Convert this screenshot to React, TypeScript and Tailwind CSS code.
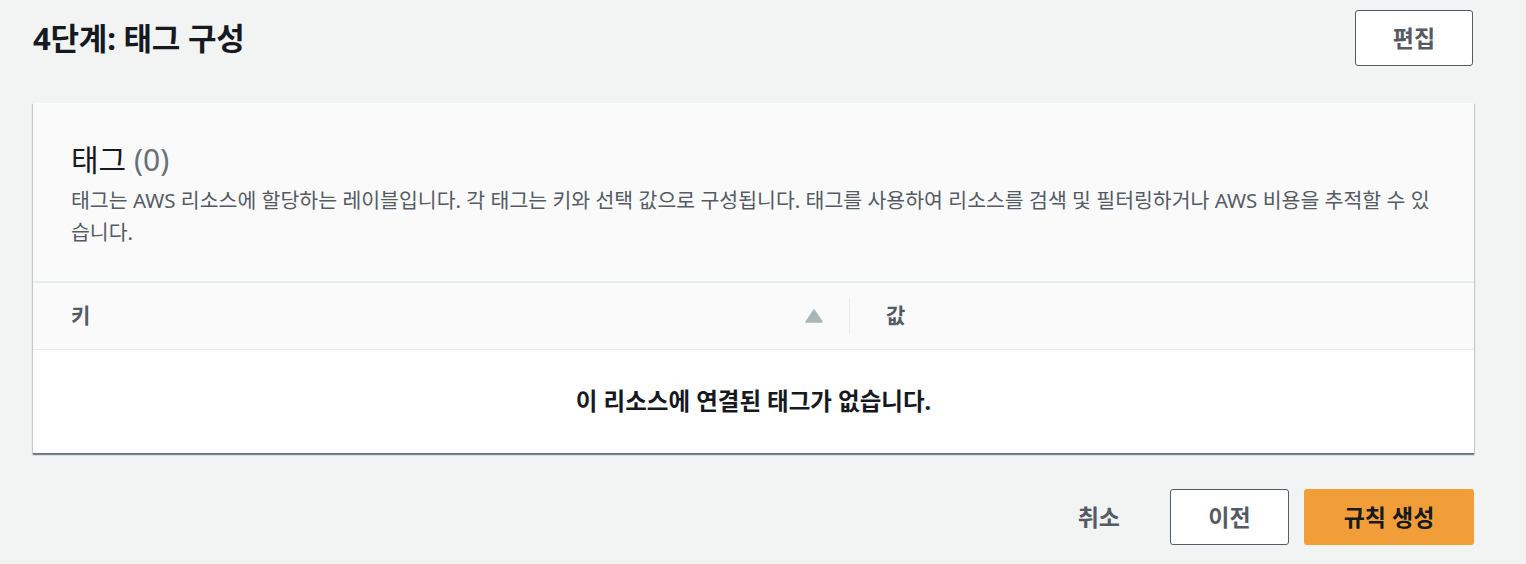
const font = { fontFamily: '"Noto Sans", "Noto Sans CJK KR", sans-serif' };

function SortUp() {
  return (
    <svg width="18" height="14" viewBox="0 0 18 14" className="block">
      <path d="M9 1 L17 13 L1 13 Z" fill="#aab7b8" stroke="#aab7b8" strokeLinejoin="round" strokeWidth="1.5" />
    </svg>
  );
}

export default function App() {
  return (
    <div className="w-[1526px] h-[564px] bg-[#f2f3f3] text-[#16191f] overflow-hidden" style={font}>
      {/* Header */}
      <div className="flex items-start justify-between pl-[33px] pr-[53px] pt-[10px]">
        <h2 className="text-[31px] font-bold leading-[56px] tracking-[-0.2px]">4단계: 태그 구성</h2>
        <button className="w-[118px] h-[56px] border border-[#545b64] rounded-[3px] bg-white text-[23px] font-bold text-[#545b64]">
          편집
        </button>
      </div>

      {/* Tags panel */}
      <div className="ml-[33px] mr-[52px] mt-[37px] bg-white shadow-[0_1px_1px_0_rgba(0,28,36,0.3),1px_1px_1px_0_rgba(0,28,36,0.15),-1px_1px_1px_0_rgba(0,28,36,0.15)]">
        <div className="bg-[#fafafa] px-[38px] pt-[37px] pb-[33px] border-b border-[#eaeded]">
          <h3 className="text-[30px] leading-[40px]">
            태그 <span className="text-[#687078]">(0)</span>
          </h3>
          <p className="mt-[4px] text-[20.5px] leading-[32px] text-[#545b64] whitespace-nowrap">
            태그는 AWS 리소스에 할당하는 레이블입니다. 각 태그는 키와 선택 값으로 구성됩니다. 태그를 사용하여 리소스를 검색 및 필터링하거나 AWS 비용을 추적할 수 있
            <br />
            습니다.
          </p>
        </div>
        <div className="flex items-center h-[68px] bg-[#fafafa] border-t border-[#eaeded] border-b">
          <div className="flex items-center w-[816px] pl-[38px] pr-[26px] justify-between">
            <span className="text-[21px] font-bold text-[#545b64]">키</span>
            <SortUp />
          </div>
          <div className="w-px h-[36px] bg-[#eaeded]" />
          <div className="pl-[36px] text-[21px] font-bold text-[#545b64]">값</div>
        </div>
        <div className="h-[104px] flex items-center justify-center border-b border-[#687078]">
          <span className="text-[23.5px] font-bold">이 리소스에 연결된 태그가 없습니다.</span>
        </div>
      </div>

      {/* Footer */}
      <div className="flex items-center justify-end gap-[15px] pr-[52px] mt-[35px]">
        <button className="h-[56px] px-[20px] text-[23px] font-bold text-[#545b64] mr-[15px]">취소</button>
        <button className="w-[119px] h-[56px] border border-[#545b64] rounded-[3px] bg-white text-[23px] font-bold text-[#545b64]">
          이전
        </button>
        <button className="w-[170px] h-[56px] rounded-[3px] bg-[#f19e38] text-[23px] font-bold text-[#16191f]">
          규칙 생성
        </button>
      </div>
    </div>
  );
}
